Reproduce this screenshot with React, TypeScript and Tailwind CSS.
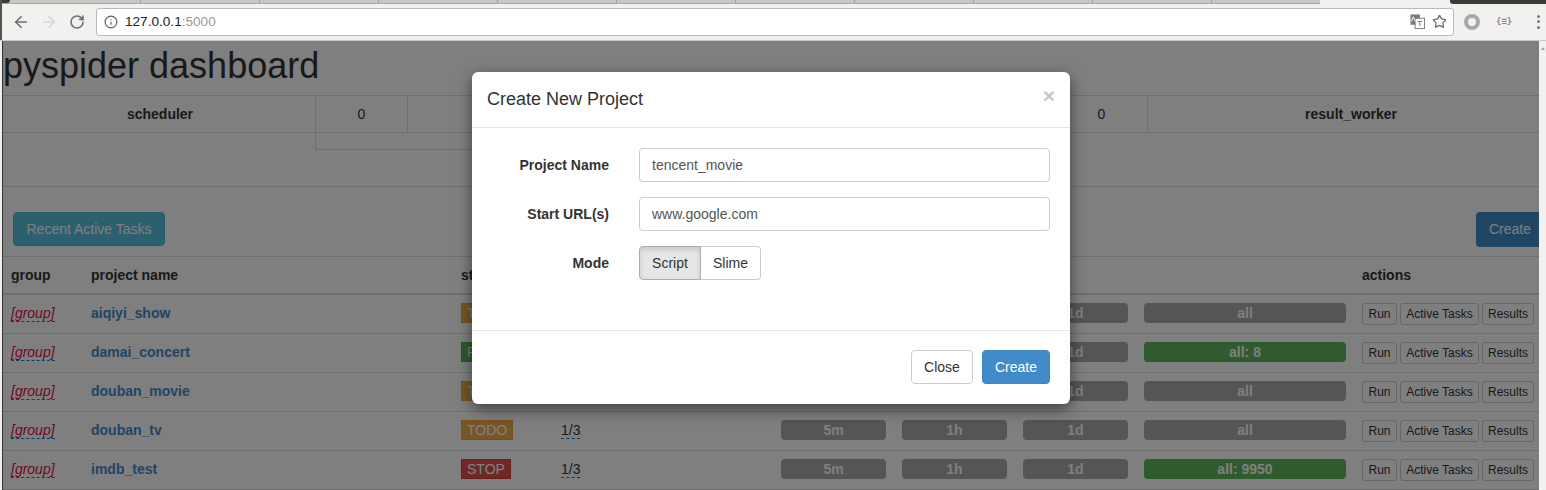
import React from "react";
import { ArrowLeft, ArrowRight, RotateCw, Info, Star } from "lucide-react";

const rows = [
  { name: "aiqiyi_show", st: "TODO", cls: "bg-[#f0ad4e] border-[#eea236]", ratio: "", all: "all", ok: false },
  { name: "damai_concert", st: "RUNNING", cls: "bg-[#5cb85c] border-[#4cae4c]", ratio: "", all: "all: 8", ok: true },
  { name: "douban_movie", st: "TODO", cls: "bg-[#f0ad4e] border-[#eea236]", ratio: "", all: "all", ok: false },
  { name: "douban_tv", st: "TODO", cls: "bg-[#f0ad4e] border-[#eea236]", ratio: "1/3", all: "all", ok: false },
  { name: "imdb_test", st: "STOP", cls: "bg-[#d9534f] border-[#d43f3a]", ratio: "1/3", all: "all: 9950", ok: true },
];

const tabs = [0, 1, 2, 3, 4, 5, 6, 7, 8, 9];

function Bar({ w, label, ok }: { w: string; label: string; ok?: boolean }) {
  return (
    <div className={`${w} ${ok ? "bg-[#5cb85c]" : "bg-[#aaaaaa]"} h-5 rounded-[4px] text-center text-[14px] leading-5 font-bold text-white`}>
      {label}
    </div>
  );
}

function Mini({ children, w }: { children: React.ReactNode; w: string }) {
  return (
    <div className={`${w} h-[22px] rounded-[3px] border border-[#cccccc] text-center text-[12px] leading-5 text-[#333333] bg-white`}>
      {children}
    </div>
  );
}

function Toolbar() {
  return (
    <div className="relative h-[41px] shrink-0 bg-[#f2f1f0] border-b border-[#c8c8c8] flex items-center">
      <div className="absolute left-0 top-0 w-[1320px] h-[4px] bg-[#c9c7c4] border-b border-[#a9a7a4] flex pl-[22px]">
        {tabs.map((t) => (
          <div key={t} className="w-[119px] h-[3px] border-r border-[#a0a0a0]"></div>
        ))}
      </div>
      <div className="absolute left-0 top-0 w-[10px] h-[3px] bg-[#3c3b37] rounded-br-[3px]"></div>
      <div className="absolute left-0 top-0 w-[2px] h-[40px] bg-[#55534f]"></div>
      <div className="absolute right-0 top-0 w-[96px] h-[4px] bg-[#3c3b37] rounded-bl-[3px]"></div>
      <div className="flex items-center mt-[3px] w-full">
        <ArrowLeft className="ml-[12px] w-[18px] h-[18px] text-[#6e6e6e]" strokeWidth={2.2} />
        <ArrowRight className="ml-[10px] w-[18px] h-[18px] text-[#d6d6d6]" strokeWidth={2.2} />
        <RotateCw className="ml-[11px] w-[16px] h-[16px] text-[#6e6e6e]" strokeWidth={2.4} />
        <div className="ml-[11px] w-[1358px] h-[28px] bg-white rounded-[3px] border border-[#b9b9b9] flex items-center">
          <Info className="ml-[7px] w-[14px] h-[14px] text-[#5f5f5f]" strokeWidth={2} />
          <span className="ml-[7px] mt-[1px] text-[13.6px] text-[#222222]">127.0.0.1<span className="text-[#9a9a9a]">:5000</span></span>
          <svg viewBox="0 0 16 16" className="ml-auto w-[15px] h-[15px]">
            <rect x="0.5" y="0.5" width="10" height="11" fill="#7a7a7a" />
            <rect x="5.5" y="4.5" width="10" height="11" fill="#ffffff" stroke="#7a7a7a" />
            <path d="M1.5 8 L3.5 3 L5.5 8 M8 8 H13 M10.5 8 V13" fill="none" stroke="#ffffff" strokeWidth="1" />
            <path d="M8 8 H13 M10.5 8 V13" fill="none" stroke="#7a7a7a" strokeWidth="1" />
          </svg>
          <Star className="ml-[7px] mr-[6px] w-[15px] h-[15px] text-[#6a6a6a]" strokeWidth={2} />
        </div>
        <div className="ml-[10px] w-4 h-4 rounded-full border-[4px] border-[#a8a8a8]"></div>
        <span className="ml-[16px] text-[9px] font-bold text-[#8a8a8a] font-['DejaVu_Sans_Mono',monospace]">{"{≡}"}</span>
        <div className="ml-[25px] flex flex-col gap-[2.5px]">
          <span className="w-[3px] h-[3px] rounded-full bg-[#777777]"></span>
          <span className="w-[3px] h-[3px] rounded-full bg-[#777777]"></span>
          <span className="w-[3px] h-[3px] rounded-full bg-[#777777]"></span>
        </div>
      </div>
    </div>
  );
}

function Dashboard() {
  return (
    <div className="bg-white text-[#333333] h-[449px] overflow-hidden">
      <h1 className="h-[54px] text-[36px] leading-[50px] font-normal">pyspider dashboard</h1>
      <div className="flex h-[38px] border-t border-[#dddddd] border-b text-[14px]">
        <div className="w-[313px] pl-[2px] font-bold text-center leading-[36px] border-r border-[#dddddd]">scheduler</div>
        <div className="w-[92px] text-center leading-[36px] border-r border-[#dddddd]">0</div>
        <div className="w-[648px]"></div>
        <div className="w-[92px] text-center leading-[36px] border-r border-[#dddddd]">0</div>
        <div className="flex-1 pl-[15px] font-bold text-center leading-[36px]">result_worker</div>
      </div>
      <div className="h-[54px] border-b border-[#dddddd]">
        <div className="ml-[312px] w-[160px] h-[17px] border-l border-b border-[#dddddd]"></div>
      </div>
      <div className="flex justify-between items-start pl-[10px] h-[69px] pt-[25px]">
        <div className="h-[34px] w-[152px] text-center rounded-[4px] bg-[#5bc0de] border border-[#46b8da] text-white text-[14px] leading-[32px]">Recent Active Tasks</div>
        <div className="h-[35px] w-[63px] pl-[13px] rounded-l-[4px] bg-[#428bca] text-white text-[14px] leading-[34px]">Create</div>
      </div>
      <div className="flex items-center h-[39px] border-t border-[#dddddd] border-b-2 text-[14px] font-bold">
        <div className="w-[88px] pl-[8px]">group</div>
        <div className="w-[370px]">project name</div>
        <div className="w-[901px]">status</div>
        <div>actions</div>
      </div>
      {rows.map((r) => (
        <div key={r.name} className="flex items-center h-[39px] pb-[2px] border-b border-[#dddddd] text-[14px]">
          <div className="w-[88px] pl-[8px]">
            <span className="italic text-[#dd1144] border-b border-dashed border-[#0088cc] leading-[16px] inline-block">[group]</span>
          </div>
          <div className="w-[370px] font-bold text-[#428bca]">{r.name}</div>
          <div className="w-[100px]">
            <span className={`${r.cls} inline-block h-[20px] border px-[5px] text-white leading-[18px]`}>{r.st}</span>
          </div>
          <div className="w-[220px]">
            {r.ratio && <span className="border-b border-dashed border-[#0088cc] inline-block leading-[16px]">{r.ratio}</span>}
          </div>
          <div className="flex gap-[16px] w-[581px]">
            <Bar w="w-[105px]" label="5m" />
            <Bar w="w-[105px]" label="1h" />
            <Bar w="w-[105px]" label="1d" />
            <Bar w="w-[202px]" label={r.all} ok={r.ok} />
          </div>
          <div className="flex gap-[3px] self-start mt-[8px]">
            <Mini w="w-[35px]">Run</Mini>
            <Mini w="w-[79px]">Active Tasks</Mini>
            <Mini w="w-[52px]">Results</Mini>
          </div>
        </div>
      ))}
    </div>
  );
}

function Modal() {
  return (
    <div className="absolute left-[472px] top-[72px] w-[598px] h-[332px] bg-white rounded-[6px] shadow-[0_5px_15px_rgba(0,0,0,0.5)] text-[#333333] text-[14px]">
      <div className="relative h-[56px] border-b border-[#e5e5e5] pl-[15px] text-[18px] leading-[55px]">
        Create New Project
        <span className="absolute right-[15px] top-[8px] text-[21px] leading-[32px] font-bold text-[#c9c9c9]">×</span>
      </div>
      <div className="h-[202px] pt-[20px] flex flex-col gap-[15px]">
        <div className="flex items-center">
          <label className="w-[137px] text-right font-bold">Project Name</label>
          <div className="ml-[30px] w-[411px] h-[34px] border border-[#cccccc] rounded-[4px] pl-[12px] leading-[32px] text-[#555555]">tencent_movie</div>
        </div>
        <div className="flex items-center">
          <label className="w-[137px] text-right font-bold">Start URL(s)</label>
          <div className="ml-[30px] w-[411px] h-[34px] border border-[#cccccc] rounded-[4px] pl-[12px] leading-[32px] text-[#555555]">www.google.com</div>
        </div>
        <div className="flex items-center">
          <label className="w-[137px] text-right font-bold">Mode</label>
          <div className="ml-[30px] flex h-[34px]">
            <div className="w-[62px] border border-[#adadad] bg-[#e6e6e6] rounded-l-[4px] text-center leading-[32px] shadow-[inset_0_3px_5px_rgba(0,0,0,0.125)]">Script</div>
            <div className="w-[60px] border border-l-0 border-[#cccccc] rounded-r-[4px] text-center leading-[32px]">Slime</div>
          </div>
        </div>
      </div>
      <div className="h-[74px] border-t border-[#e5e5e5] flex justify-end items-start pt-[19px] pr-[20px] gap-[9px]">
        <div className="w-[62px] h-[34px] border border-[#cccccc] rounded-[4px] text-center leading-[32px]">Close</div>
        <div className="w-[68px] h-[34px] border border-[#3f86c4] bg-[#428bca] rounded-[4px] text-center leading-[32px] text-white">Create</div>
      </div>
    </div>
  );
}

export default function App() {
  return (
    <div className="relative w-[1546px] h-[490px] overflow-hidden bg-[#f2f1f0] font-['Liberation_Sans',Arial,sans-serif]">
      <Toolbar />
      <div className="flex h-[449px]">
        <div className="w-[2px] bg-[#f2f1f0]"></div>
        <div className="w-px bg-[#333333]"></div>
        <div className="relative w-[1536px] h-[449px] overflow-hidden">
          <Dashboard />
          <div className="absolute inset-0 bg-black/50"></div>
        </div>
        <div className="flex-1 bg-[#f1f1f1] flex justify-end pt-[6px] pr-px items-start">
          <svg viewBox="0 0 4 3" className="w-1 h-[3px]">
            <path d="M2 0 L4 3 H0 Z" fill="#a3a3a3" />
          </svg>
        </div>
      </div>
      <Modal />
    </div>
  );
}
